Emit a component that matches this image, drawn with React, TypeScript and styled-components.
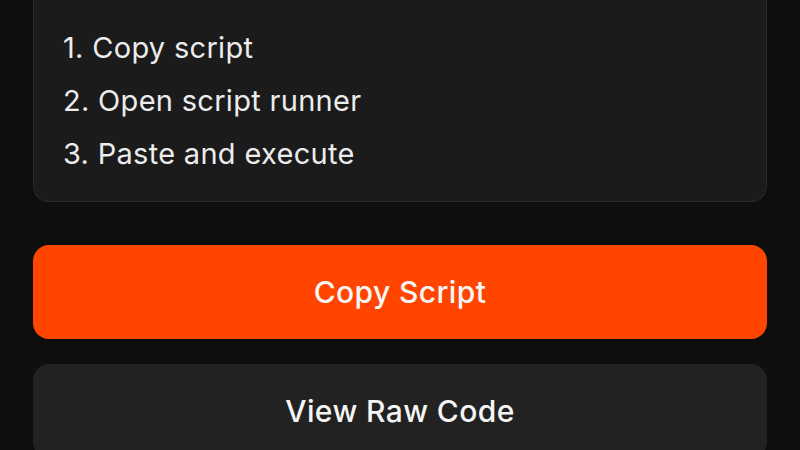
import React from "react";
import styled, { createGlobalStyle } from "styled-components";

const Global = createGlobalStyle`
  html, body { margin: 0; padding: 0; background: #0e0e0e; }
  body { font-family: Inter, "Noto Sans", sans-serif; overflow: hidden; }
`;

const Page = styled.div`
  display: flex;
  flex-direction: column;
  padding: 0 33px;
  height: 450px;
  box-sizing: border-box;
`;

const Card = styled.div`
  background: #1b1b1b;
  border: 1px solid #2a2a2a;
  border-top: none;
  border-radius: 0 0 16px 16px;
  padding: 21px 29px;
`;

const Steps = styled.ol`
  list-style: none;
  margin: 0;
  padding: 0;
`;

const Step = styled.li`
  font-size: 29px;
  line-height: 53px;
  letter-spacing: 0.3px;
  color: #ececec;
  font-weight: 400;
  white-space: nowrap;
`;

const Actions = styled.div`
  display: flex;
  flex-direction: column;
  gap: 25px;
  margin-top: 43px;
`;

const Button = styled.button<{ $primary?: boolean }>`
  height: 94px;
  border: none;
  border-radius: 16px;
  background: ${(p) => (p.$primary ? "#ff4500" : "#222222")};
  color: #f5f5f5;
  font-family: Inter, "Noto Sans", sans-serif;
  font-size: 30px;
  font-weight: 500;
  letter-spacing: 0.4px;
  cursor: pointer;
  flex-shrink: 0;
`;

export default function App() {
  return (
    <>
      <Global />
      <Page>
        <Card>
          <Steps>
            <Step>1. Copy script</Step>
            <Step>2. Open script runner</Step>
            <Step>3. Paste and execute</Step>
          </Steps>
        </Card>
        <Actions>
          <Button $primary>Copy Script</Button>
          <Button>View Raw Code</Button>
        </Actions>
      </Page>
    </>
  );
}
